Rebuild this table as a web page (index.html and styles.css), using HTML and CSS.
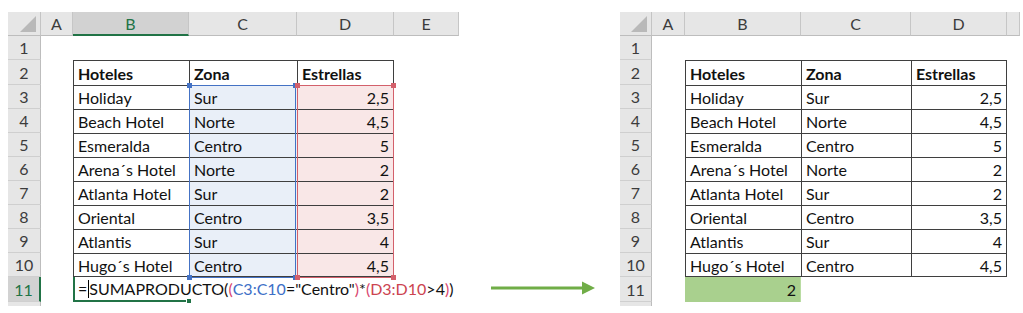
FILE: index.html
```html
<!DOCTYPE html>
<html lang="es">
<head>
<meta charset="utf-8">
<title>SUMAPRODUCTO</title>
<link rel="stylesheet" href="styles.css">
</head>
<body>
<div class="page">
  <div class="sheet sheet-left">
    <div class="corner"><svg width="17" height="17" viewBox="0 0 17 17"><polygon points="16,0 16,16 0,16" fill="#b9b9b9"/></svg></div>
    <div class="ch">A</div><div class="ch ch-sel">B</div><div class="ch">C</div><div class="ch">D</div><div class="ch">E</div>

    <div class="rh">1</div><div class="c"></div><div class="c"></div><div class="c"></div><div class="c"></div><div class="c"></div>

    <div class="rh">2</div><div class="c"></div><div class="c t b">Hoteles</div><div class="c t b">Zona</div><div class="c t tr b">Estrellas</div><div class="c"></div>

    <div class="rh">3</div><div class="c"></div><div class="c t">Holiday</div>
    <div class="c t blue anchor">Sur<span class="range range-c"><i class="h h1"></i><i class="h h2"></i><i class="h h3"></i><i class="h h4"></i></span></div>
    <div class="c t tr red num anchor">2,5<span class="range range-d"><i class="h h1"></i><i class="h h2"></i><i class="h h3"></i><i class="h h4"></i></span></div>
    <div class="c"></div>
    <div class="rh">4</div><div class="c"></div><div class="c t">Beach Hotel</div><div class="c t blue">Norte</div><div class="c t tr red num">4,5</div><div class="c"></div>
    <div class="rh">5</div><div class="c"></div><div class="c t">Esmeralda</div><div class="c t blue">Centro</div><div class="c t tr red num">5</div><div class="c"></div>
    <div class="rh">6</div><div class="c"></div><div class="c t">Arena´s Hotel</div><div class="c t blue">Norte</div><div class="c t tr red num">2</div><div class="c"></div>
    <div class="rh">7</div><div class="c"></div><div class="c t">Atlanta Hotel</div><div class="c t blue">Sur</div><div class="c t tr red num">2</div><div class="c"></div>
    <div class="rh">8</div><div class="c"></div><div class="c t">Oriental</div><div class="c t blue">Centro</div><div class="c t tr red num">3,5</div><div class="c"></div>
    <div class="rh">9</div><div class="c"></div><div class="c t">Atlantis</div><div class="c t blue">Sur</div><div class="c t tr red num">4</div><div class="c"></div>
    <div class="rh">10</div><div class="c"></div><div class="c t tb">Hugo´s Hotel</div><div class="c t tb blue">Centro</div><div class="c t tr tb red num">4,5</div><div class="c"></div>

    <div class="rh rh-sel">11</div><div class="c"></div>
    <div class="c formula"><span class="k">=</span><span class="cursor"></span><span class="k">SUMAPRODUCTO(</span><span class="p">(</span><span class="fb">C3:C10</span><span class="k">="Centro"</span><span class="p">)</span><span class="k">*</span><span class="p">(</span><span class="fr">D3:D10</span><span class="k">&gt;4</span><span class="p">)</span><span class="k">)</span><i class="ah"></i></div>
    <div class="c"></div><div class="c"></div><div class="c"></div>

    <div class="rh rh-last"></div>
  </div>

  <div class="arrow">
    <svg width="104" height="14" viewBox="0 0 104 14"><rect x="0" y="5.5" width="92" height="3" fill="#70ad47"/><polygon points="91,0.5 104,7 91,13.5" fill="#70ad47"/></svg>
  </div>

  <div class="sheet sheet-right">
    <div class="corner"><svg width="17" height="17" viewBox="0 0 17 17"><polygon points="16,0 16,16 0,16" fill="#b9b9b9"/></svg></div>
    <div class="ch">A</div><div class="ch">B</div><div class="ch">C</div><div class="ch">D</div><div class="ch"></div>

    <div class="rh">1</div><div class="c"></div><div class="c"></div><div class="c"></div><div class="c"></div><div class="c"></div>
    <div class="rh">2</div><div class="c"></div><div class="c t b">Hoteles</div><div class="c t b">Zona</div><div class="c t tr b">Estrellas</div><div class="c"></div>
    <div class="rh">3</div><div class="c"></div><div class="c t">Holiday</div><div class="c t">Sur</div><div class="c t tr num">2,5</div><div class="c"></div>
    <div class="rh">4</div><div class="c"></div><div class="c t">Beach Hotel</div><div class="c t">Norte</div><div class="c t tr num">4,5</div><div class="c"></div>
    <div class="rh">5</div><div class="c"></div><div class="c t">Esmeralda</div><div class="c t">Centro</div><div class="c t tr num">5</div><div class="c"></div>
    <div class="rh">6</div><div class="c"></div><div class="c t">Arena´s Hotel</div><div class="c t">Norte</div><div class="c t tr num">2</div><div class="c"></div>
    <div class="rh">7</div><div class="c"></div><div class="c t">Atlanta Hotel</div><div class="c t">Sur</div><div class="c t tr num">2</div><div class="c"></div>
    <div class="rh">8</div><div class="c"></div><div class="c t">Oriental</div><div class="c t">Centro</div><div class="c t tr num">3,5</div><div class="c"></div>
    <div class="rh">9</div><div class="c"></div><div class="c t">Atlantis</div><div class="c t">Sur</div><div class="c t tr num">4</div><div class="c"></div>
    <div class="rh">10</div><div class="c"></div><div class="c t tb">Hugo´s Hotel</div><div class="c t tb">Centro</div><div class="c t tr tb num">4,5</div><div class="c"></div>
    <div class="rh">11</div><div class="c"></div><div class="c result num">2</div><div class="c"></div><div class="c"></div><div class="c"></div>
    <div class="rh rh-last"></div>
  </div>
</div>
</body>
</html>
```

FILE: styles.css
```css
* { box-sizing: border-box; }

body {
  margin: 0;
  background: #ffffff;
  font-family: Lato, "Liberation Sans", sans-serif;
  font-size: 16px;
  color: #111;
}

.page {
  display: flex;
  align-items: flex-start;
  padding-top: 12px;
}

.sheet {
  display: grid;
  grid-template-rows: 24px 24px 25px repeat(8, 24px) 25px 4px;
}

.sheet-left {
  margin-left: 8px;
  grid-template-columns: 33px 32px 116px 108px 97px 65px;
}

.sheet-right {
  margin-left: 25px;
  grid-template-columns: 32px 33px 116px 110px 96px 13px;
}

.arrow {
  margin-left: 32px;
  margin-top: 269px;
  width: 104px;
  height: 14px;
}
.arrow svg { display: block; }

/* headers */
.corner {
  background: #e6e6e6;
  border-right: 1px solid #c4c4c4;
  border-bottom: 1px solid #bdbdbd;
  display: flex;
  align-items: flex-end;
  justify-content: flex-end;
  padding: 0 3px 2px 0;
}
.corner svg { display: block; }

.ch {
  background: #e6e6e6;
  border-right: 1px solid #c6c6c6;
  border-bottom: 1px solid #bdbdbd;
  color: #3c3c3c;
  display: flex;
  align-items: center;
  justify-content: center;
  font-size: 16px;
}
.ch-sel {
  background: #d2d2d2;
  color: #217346;
  border-bottom: 2px solid #217346;
}

.rh {
  background: #e6e6e6;
  border-right: 1px solid #bdbdbd;
  border-bottom: 1px solid #cfcfcf;
  color: #3c3c3c;
  display: flex;
  align-items: center;
  justify-content: center;
  font-size: 16px;
}
.rh-sel {
  background: #d2d2d2;
  color: #217346;
  border-right: 2px solid #217346;
}
.rh-last { border-bottom: 0; }

/* cells */
.c {
  display: flex;
  align-items: center;
  padding: 0 4px;
  white-space: nowrap;
  background: #fff;
}
.t {
  border-left: 1px solid #3f3f3f;
  border-top: 1px solid #3f3f3f;
}
.tr { border-right: 1px solid #3f3f3f; }
.tb { border-bottom: 1px solid #3f3f3f; }
.b { font-weight: 700; }
.num { justify-content: flex-end; }

.blue { background: #e9eff8; }
.red { background: #f9e7e7; }

.result {
  background: #a9d08e;
  border-right: 1px solid #b9dca2;
}

/* range references drawn over the cells */
.anchor { position: relative; }
.range {
  position: absolute;
  z-index: 2;
  top: -1px;
  height: 193px;
  pointer-events: none;
}
.range-c {
  left: -1px;
  right: 1px;
  border: 1px solid #4472c4;
}
.range-d {
  left: -1px;
  right: -1px;
  border: 1px solid #d3606b;
}
.h {
  position: absolute;
  width: 5px;
  height: 5px;
}
.range-c .h { background: #4472c4; }
.range-d .h { background: #d3606b; }
.h1 { left: -3px; top: -3px; }
.h2 { right: -3px; top: -3px; }
.h3 { left: -3px; bottom: -3px; }
.h4 { right: -3px; bottom: -3px; }

/* formula in edit mode, active cell B11 */
.formula {
  position: relative;
  z-index: 3;
  overflow: visible;
  background: transparent;
  border-left: 2px solid #217346;
  border-bottom: 2px solid #217346;
  padding-left: 3px;
}
.k { color: #111; }
.p { color: #d9466f; }
.fb { color: #3d6fc7; }
.fr { color: #cc4450; }
.cursor {
  display: inline-block;
  width: 0;
  height: 18px;
  border-left: 1px solid #000;
  margin-left: 1px;
}
.ah {
  position: absolute;
  right: -3px;
  bottom: -4px;
  width: 6px;
  height: 6px;
  background: #217346;
  border: 1px solid #fff;
}
```
